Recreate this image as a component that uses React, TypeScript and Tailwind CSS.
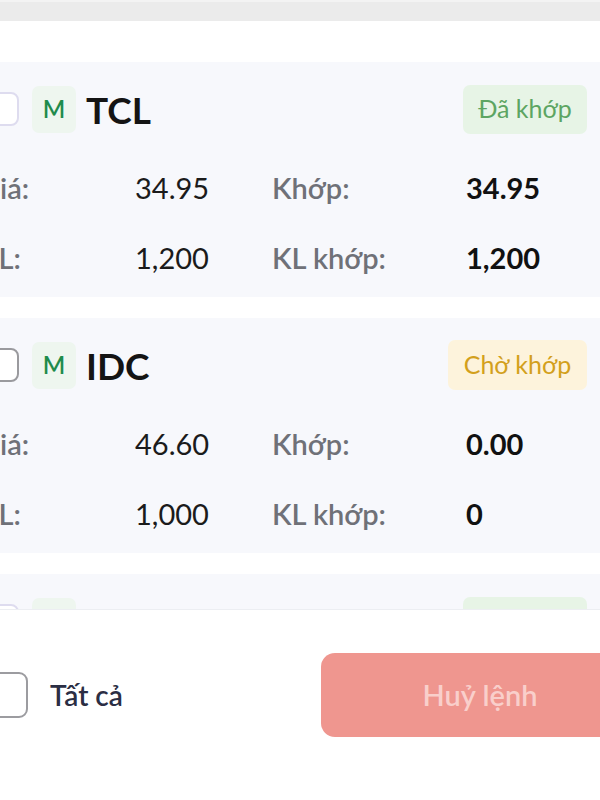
import React from "react";

type Order = {
  sym: string;
  status: "done" | "wait";
  price: string;
  qty: string;
  mPrice: string;
  mQty: string;
  disabled: boolean;
};

const orders: Order[] = [
  { sym: "TCL", status: "done", price: "34.95", qty: "1,200", mPrice: "34.95", mQty: "1,200", disabled: true },
  { sym: "IDC", status: "wait", price: "46.60", qty: "1,000", mPrice: "0.00", mQty: "0", disabled: false },
  { sym: "VNM", status: "done", price: "70.00", qty: "500", mPrice: "70.00", mQty: "500", disabled: true },
];

function Card({ o }: { o: Order }) {
  return (
    <div className="ml-[-31px] w-[631px] shrink-0 bg-[#f7f8fc] pl-[16px] pr-[13px] pt-[23px] pb-[22px]">
      <div className="flex h-[48px] items-center">
        <div
          className={
            o.disabled
              ? "h-[34px] w-[34px] shrink-0 rounded-[8px] border-2 border-[#dedcef] bg-white"
              : "h-[34px] w-[34px] shrink-0 rounded-[8px] border-2 border-[#9a9a9e] bg-white"
          }
        />
        <div className="ml-[13px] flex h-[47px] w-[44px] items-center justify-center rounded-[7px] bg-[#eef6ef] text-[24px] font-semibold text-[#1f8b4c]">
          M
        </div>
        <div className="ml-[10px] text-[37px] font-bold leading-none text-[#141414]">{o.sym}</div>
        <div className="flex-1" />
        {o.status === "done" ? (
          <div className="flex h-[49px] w-[124px] items-center justify-center rounded-[7px] bg-[#e7f4e6] text-[25px] text-[#5da562]">
            Đã khớp
          </div>
        ) : (
          <div className="flex h-[50px] w-[139px] items-center justify-center rounded-[7px] bg-[#fdf3dc] text-[25px] text-[#d3a01c]">
            Chờ khớp
          </div>
        )}
      </div>
      <div className="ml-[-6px] mt-[36px] grid h-[36px] grid-cols-[156px_137px_194px_1fr] items-center text-[29px] leading-none">
        <span className="font-semibold text-[#6f7178]">Giá:</span>
        <span className="text-[#1b1b1b]">{o.price}</span>
        <span className="font-semibold text-[#6f7178]">Khớp:</span>
        <span className="font-bold text-[#111]">{o.mPrice}</span>
      </div>
      <div className="ml-[-6px] mt-[34px] grid h-[36px] grid-cols-[156px_137px_194px_1fr] items-center text-[29px] leading-none">
        <span className="font-semibold text-[#6f7178]">KL:</span>
        <span className="text-[#1b1b1b]">{o.qty}</span>
        <span className="font-semibold text-[#6f7178]">KL khớp:</span>
        <span className="font-bold text-[#111]">{o.mQty}</span>
      </div>
    </div>
  );
}

export default function App() {
  return (
    <div
      className="relative h-[800px] w-[600px] overflow-hidden bg-white"
      style={{ fontFamily: "Lato, 'Noto Sans', sans-serif" }}
    >
      <div className="h-[21px] border-t-2 border-[#f3f3f3] bg-[#ebebeb]" />
      <div className="h-[41px]" />
      <div className="flex flex-col gap-[21px]">
        {orders.map((o) => (
          <Card key={o.sym} o={o} />
        ))}
      </div>
      <div className="absolute bottom-0 left-0 right-0 top-[609px] border-t border-[#eceef2] bg-white">
        <div className="flex h-full items-start pt-[43px]">
          <div className="flex h-[84px] items-center">
            <div className="ml-[-18px] h-[46px] w-[46px] shrink-0 rounded-[9px] border-2 border-[#9c9ca0] bg-white" />
            <span className="ml-[22px] text-[28px] font-semibold text-[#2b2e44]">Tất cả</span>
          </div>
          <div className="ml-auto mr-[-39px] flex h-[84px] w-[318px] items-center justify-center rounded-[14px] bg-[#ef968f] text-[29px] font-semibold text-[#f9cfcb]">
            Huỷ lệnh
          </div>
        </div>
      </div>
    </div>
  );
}
